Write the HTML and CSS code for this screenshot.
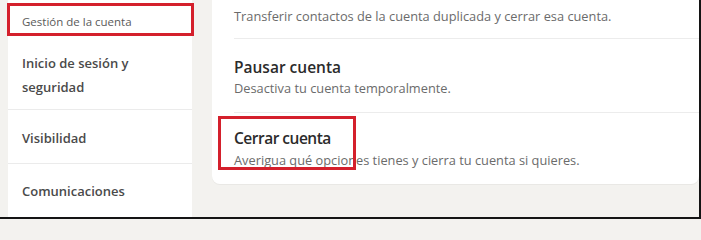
FILE: index.html
```html
<!DOCTYPE html>
<html lang="es">
<head>
<meta charset="utf-8">
<title>Preferencias de la cuenta</title>
<link rel="stylesheet" href="styles.css">
</head>
<body>
<div class="frame">
  <nav class="sidebar">
    <div class="nav-sub">Gestión de la cuenta</div>
    <div class="nav-item nav-item--tall">Inicio de sesión y<br>seguridad</div>
    <div class="nav-item nav-item--vis">Visibilidad</div>
    <div class="nav-item nav-item--com">Comunicaciones</div>
  </nav>
  <main class="card">
    <div class="row row--first">
      <p class="desc">Transferir contactos de la cuenta duplicada y cerrar esa cuenta.</p>
    </div>
    <div class="row row--pause">
      <h3 class="title">Pausar cuenta</h3>
      <p class="desc">Desactiva tu cuenta temporalmente.</p>
    </div>
    <div class="row row--close">
      <h3 class="title title--close">Cerrar cuenta</h3>
      <p class="desc">Averigua qué opciones tienes y cierra tu cuenta si quieres.</p>
    </div>
  </main>
  <div class="mark mark--nav"></div>
  <div class="mark mark--close"></div>
</div>
</body>
</html>
```
FILE: styles.css
```css
html, body {
  margin: 0;
  padding: 0;
  height: 219px;
  overflow: hidden;
}
body {
  background: #f3f2ef;
  font-family: "Open Sans", "Noto Sans", "Liberation Sans", sans-serif;
  color: rgba(0,0,0,0.9);
}
.frame {
  position: relative;
  width: 701px;
  height: 219px;
  box-sizing: border-box;
  border-right: 2px solid #141414;
  border-bottom: 2px solid #141414;
  display: flex;
  align-items: flex-start;
  gap: 20px;
  padding-left: 8px;
  overflow: hidden;
}
.sidebar {
  width: 184px;
  height: 217px;
  background: #fff;
  display: flex;
  flex-direction: column;
  flex-shrink: 0;
}
.nav-sub {
  height: 38px;
  box-sizing: border-box;
  padding: 12px 0 0 14px;
  font-size: 11.5px;
  line-height: 20px;
  color: #5a5a5a;
}
.nav-item {
  padding-left: 14px;
  font-size: 13px;
  font-weight: 600;
  line-height: 24px;
  color: #4a4a4a;
  border-bottom: 1px solid #ebebeb;
}
.nav-item--tall {
  padding-top: 13px;
  padding-bottom: 10px;
}
.nav-item--vis {
  padding-top: 16px;
  padding-bottom: 13px;
}
.nav-item--com {
  padding-top: 15px;
  border-bottom: none;
}
.card {
  flex: 1;
  background: #fff;
  border-radius: 0 0 8px 8px;
  height: 184px;
  box-shadow: 0 1px 0 #e9e8e5;
}
.row {
  margin-left: 22px;
  border-bottom: 1px solid #ececec;
  box-sizing: border-box;
}
.row--first {
  height: 39px;
  padding-top: 6px;
}
.row--pause {
  height: 74px;
  padding-top: 17px;
}
.row--close {
  border-bottom: none;
  padding-top: 13px;
}
.title {
  margin: 0;
  font-size: 15.5px;
  font-weight: 600;
  line-height: 22px;
  color: #2b2b2b;
}
.title--close {
  font-size: 15.5px;
  letter-spacing: -0.5px;
  line-height: 24px;
}
.desc {
  margin: 0;
  font-size: 12.8px;
  line-height: 20px;
  color: #6b6b6b;
}
.mark {
  position: absolute;
  border: 3px solid #d4202c;
  box-sizing: border-box;
}
.mark--nav {
  left: 7px;
  top: 3px;
  width: 187px;
  height: 33px;
}
.mark--close {
  left: 218px;
  top: 116px;
  width: 138px;
  height: 54px;
}
```
